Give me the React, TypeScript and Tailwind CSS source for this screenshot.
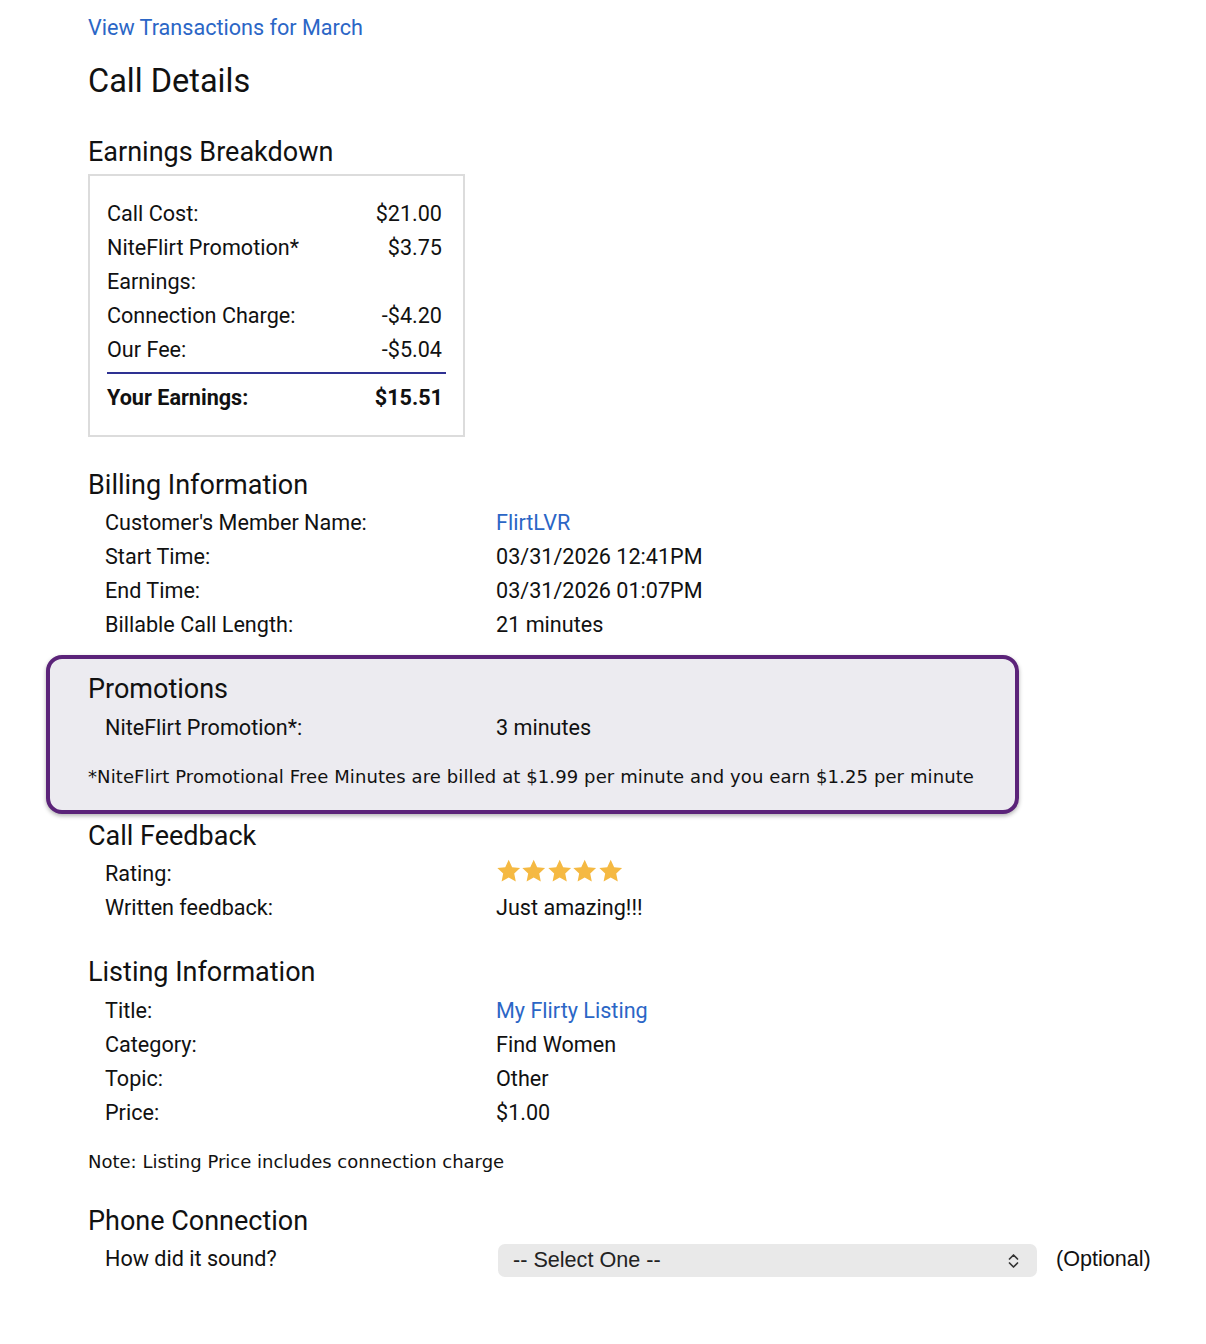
import React from "react";

const Row = ({ label, children }: { label: string; children: React.ReactNode }) => (
  <div className="grid grid-cols-[391px_1fr] h-[34px] items-center pl-[17px]">
    <div>{label}</div>
    <div>{children}</div>
  </div>
);

const Star = () => (
  <svg width="25.4" height="24" viewBox="0 0 24 23" className="block">
    <path
      d="M12 0.8l3.3 7 7.6 0.9-5.6 5.2 1.5 7.6L12 17.7l-6.8 3.8 1.5-7.6L1.1 8.7l7.6-0.9z"
      fill="#f5b942"
    />
  </svg>
);

export default function App() {
  return (
    <div className="bg-white min-h-[1344px] text-[21.6px] text-[#111] font-['Roboto',sans-serif] pt-[11px]">
      <div className="pl-[88px]">
        <a className="block h-[34px] leading-[34px] text-[#2b66c6]">View Transactions for March</a>
        <h1 className="mt-[16px] h-[40px] leading-[40px] text-[32.5px]">Call Details</h1>
        <h2 className="mt-[34px] h-[34px] leading-[34px] text-[27px]">Earnings Breakdown</h2>
        <div className="mt-[5px] w-[377px] border-2 border-[#dcdcdc] pt-[21px] pb-[20px] pl-[17px] pr-[17px]">
          <div className="pr-[4px]">
            {[
              ["Call Cost:", "$21.00"],
              ["NiteFlirt Promotion*", "$3.75"],
              ["Earnings:", ""],
              ["Connection Charge:", "-$4.20"],
              ["Our Fee:", "-$5.04"],
            ].map(([l, v]) => (
              <div key={l} className="flex justify-between h-[34px] items-center">
                <span>{l}</span>
                <span>{v}</span>
              </div>
            ))}
          </div>
          <div className="mt-[5px] h-[2px] bg-[#2e3192]" />
          <div className="mt-[7px] pr-[3px] flex justify-between h-[34px] items-center font-bold">
            <span>Your Earnings:</span>
            <span>$15.51</span>
          </div>
        </div>

        <h2 className="mt-[31px] h-[34px] leading-[34px] text-[27px]">Billing Information</h2>
        <div className="mt-[4px]">
          <Row label="Customer's Member Name:">
            <span className="text-[#2b66c6]">FlirtLVR</span>
          </Row>
          <Row label="Start Time:">03/31/2026 12:41PM</Row>
          <Row label="End Time:">03/31/2026 01:07PM</Row>
          <Row label="Billable Call Length:">21 minutes</Row>
        </div>
      </div>

      <div className="mt-[13px] ml-[46px] w-[973px] border-4 border-[#5b2379] rounded-[16px] bg-[#ecebf0] shadow-[0_2px_4px_rgba(0,0,0,0.3)] pl-[38px] pt-[13px] pb-[23px]">
        <h2 className="h-[34px] leading-[34px] text-[27px]">Promotions</h2>
        <div className="mt-[5px]">
          <Row label="NiteFlirt Promotion*:">3 minutes</Row>
        </div>
        <p className="mt-[22px] h-[20px] leading-[20px] text-[18px] tracking-[0.1px] font-['DejaVu_Sans',sans-serif]">
          *NiteFlirt Promotional Free Minutes are billed at $1.99 per minute and you earn $1.25 per minute
        </p>
      </div>

      <div className="pl-[88px]">
        <h2 className="mt-[5px] h-[34px] leading-[34px] text-[27px]">Call Feedback</h2>
        <div className="mt-[4px]">
          <Row label="Rating:">
            <div className="flex mb-[7px]">
              <Star />
              <Star />
              <Star />
              <Star />
              <Star />
            </div>
          </Row>
          <Row label="Written feedback:">Just amazing!!!</Row>
        </div>

        <h2 className="mt-[30px] h-[34px] leading-[34px] text-[27px]">Listing Information</h2>
        <div className="mt-[5px]">
          <Row label="Title:">
            <span className="text-[#2b66c6]">My Flirty Listing</span>
          </Row>
          <Row label="Category:">Find Women</Row>
          <Row label="Topic:">Other</Row>
          <Row label="Price:">$1.00</Row>
        </div>
        <p className="mt-[22px] h-[20px] leading-[20px] text-[18px] font-['DejaVu_Sans',sans-serif]">
          Note: Listing Price includes connection charge
        </p>

        <h2 className="mt-[32px] h-[34px] leading-[34px] text-[27px]">Phone Connection</h2>
        <div className="mt-[4px] grid grid-cols-[393px_539px_auto] items-center pl-[17px] h-[34px]">
          <div>How did it sound?</div>
          <div className="h-[33px] mt-[2px] rounded-[7px] bg-[#e9e9e9] flex items-center justify-between pl-[15px] pr-[18px] font-['Liberation_Sans',sans-serif] text-[#222]">
            <span>-- Select One --</span>
            <svg width="11" height="18" viewBox="0 0 11 18" fill="none" stroke="#333" strokeWidth="1.7" strokeLinecap="round" strokeLinejoin="round">
              <path d="M1.5 7l4-4 4 4" />
              <path d="M1.5 11l4 4 4-4" />
            </svg>
          </div>
          <div className="pl-[19px] font-['Liberation_Sans',sans-serif]">(Optional)</div>
        </div>
      </div>
    </div>
  );
}
